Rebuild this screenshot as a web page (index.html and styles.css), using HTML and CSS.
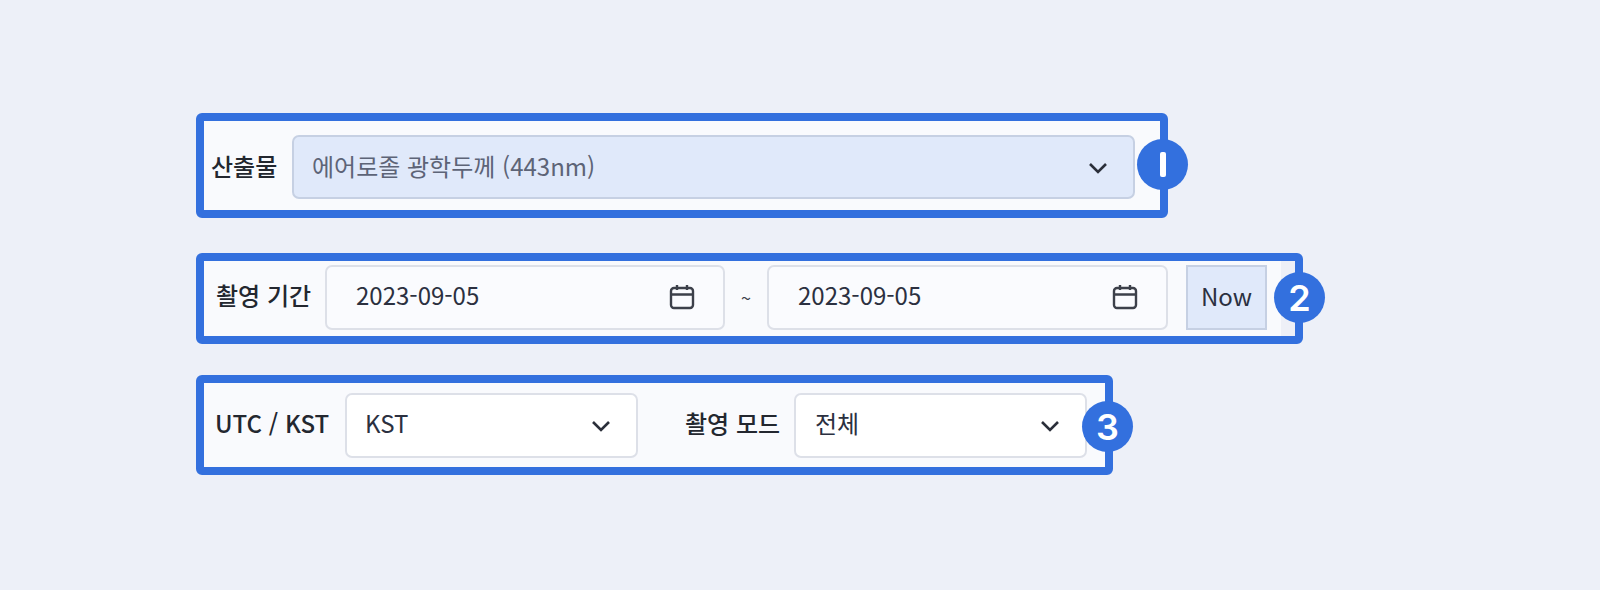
FILE: index.html
```html
<!DOCTYPE html>
<html lang="ko">
<head>
<meta charset="utf-8">
<title>Filter controls</title>
<link rel="stylesheet" href="styles.css">
</head>
<body>
<main class="stack">
  <section class="row row-one">
    <span class="label label-one">산출물</span>
    <div class="field select-blue">
      <span class="value muted">에어로졸 광학두께 (443nm)</span>
      <svg class="chev chev-blue" viewBox="0 0 20 12"><path d="M2 2l8 8 8-8"/></svg>
    </div>
    <span class="badge badge-one"><i class="bar"></i></span>
  </section>

  <section class="row row-two">
    <span class="label label-two">촬영 기간</span>
    <div class="field date">
      <span class="value">2023-09-05</span>
      <svg class="cal" viewBox="0 0 26 26"><rect x="2" y="4" width="22" height="20" rx="3"/><path d="M2 10.5h22M8 1v5M18 1v5"/></svg>
    </div>
    <span class="tilde">~</span>
    <div class="field date date-end">
      <span class="value">2023-09-05</span>
      <svg class="cal" viewBox="0 0 26 26"><rect x="2" y="4" width="22" height="20" rx="3"/><path d="M2 10.5h22M8 1v5M18 1v5"/></svg>
    </div>
    <button class="now">Now</button>
    <span class="stripe"></span>
    <span class="badge badge-two">2</span>
  </section>

  <section class="row row-three">
    <span class="label label-three">UTC / KST</span>
    <div class="field select-white kst">
      <span class="value">KST</span>
      <svg class="chev" viewBox="0 0 20 12"><path d="M2 2l8 8 8-8"/></svg>
    </div>
    <span class="label label-mode">촬영 모드</span>
    <div class="field select-white mode">
      <span class="value">전체</span>
      <svg class="chev" viewBox="0 0 20 12"><path d="M2 2l8 8 8-8"/></svg>
    </div>
    <span class="badge badge-three">3</span>
  </section>
</main>
</body>
</html>
```
FILE: styles.css
```css
* { box-sizing: border-box; }
html, body { margin: 0; height: 590px; overflow: hidden; }
body {
  background: #edf0f8;
  font-family: "Noto Sans CJK KR", "Noto Sans", sans-serif;
  color: #2b3040;
  font-size: 24px;
}
.stack {
  display: flex;
  flex-direction: column;
  align-items: flex-start;
  padding: 113px 0 0 196px;
}
.row {
  position: relative;
  display: flex;
  align-items: center;
  border: 8px solid #3370de;
  border-radius: 6px;
  background: #f9fafd;
}
.row-one { width: 972px; height: 105px; padding: 2px 0 0 7px; }
.row-two { width: 1107px; height: 91px; margin-top: 35px; padding: 0 0 3px 12px; }
.row-three { width: 917px; height: 100px; margin-top: 31px; padding-left: 11px; }
.label {
  font-size: 24px;
  font-weight: 500;
  color: #23272f;
  white-space: nowrap;
  line-height: 1;
  padding-bottom: 4px;
}
.label-one { width: 66px; margin-right: 15px; padding-bottom: 2px; }
.label-two { width: 95px; margin-right: 14px; }
.label-three { width: 115px; margin-right: 15px; }
.label-mode { width: 94px; margin-left: 47px; margin-right: 15px; }
.field {
  display: flex;
  align-items: center;
  justify-content: space-between;
  height: 65px;
  padding-bottom: 4px;
  border-radius: 7px;
  border: 2px solid #dde0e8;
  background: #fff;
}
.value { line-height: 1; white-space: nowrap; }
.muted { color: #5d6477; }
.select-blue {
  width: 843px;
  height: 64px;
  padding: 0 25px 2px 18px;
  background: #e0e9fa;
  border-color: #c6d0e3;
}
.date {
  width: 400px;
  padding: 0 28px 4px 29px;
  background: #fafbfe;
}
.date-end { width: 401px; }
.kst { width: 293px; padding: 0 25px 4px 18px; }
.mode { width: 293px; padding: 0 25px 4px 19px; }
.chev {
  width: 20px;
  height: 12px;
  margin-top: 6px;
  fill: none;
  stroke: #2b2f3a;
  stroke-width: 2.6;
}
.chev-blue { margin-top: 4px; }
.cal {
  width: 26px;
  height: 26px;
  margin-top: 4px;
  fill: none;
  stroke: #3c404a;
  stroke-width: 2.4;
}
.tilde {
  width: 42px;
  text-align: center;
  font-size: 18px;
  color: #3c404a;
}
.now {
  width: 81px;
  height: 65px;
  margin-left: 18px;
  padding: 0 0 4px;
  border: 2px solid #c6d0e3;
  background: #e0e9fa;
  color: #2b3040;
  font: inherit;
}
.stripe {
  position: absolute;
  top: 0;
  bottom: 0;
  right: 0;
  width: 14px;
  background: #eef0f7;
}
.badge {
  position: absolute;
  display: flex;
  align-items: center;
  justify-content: center;
  width: 51px;
  height: 51px;
  border-radius: 50%;
  background: #3370de;
  color: #fff;
  font-family: "Inter", "Noto Sans", sans-serif;
  font-size: 36px;
  font-weight: 600;
  line-height: 1;
}
.badge-one { left: 933px; top: 18px; }
.badge-two { left: 1070px; top: 11px; }
.badge-three { left: 878px; top: 18px; }
.bar {
  width: 6px;
  height: 25px;
  border-radius: 2px;
  background: #fff;
}
```
